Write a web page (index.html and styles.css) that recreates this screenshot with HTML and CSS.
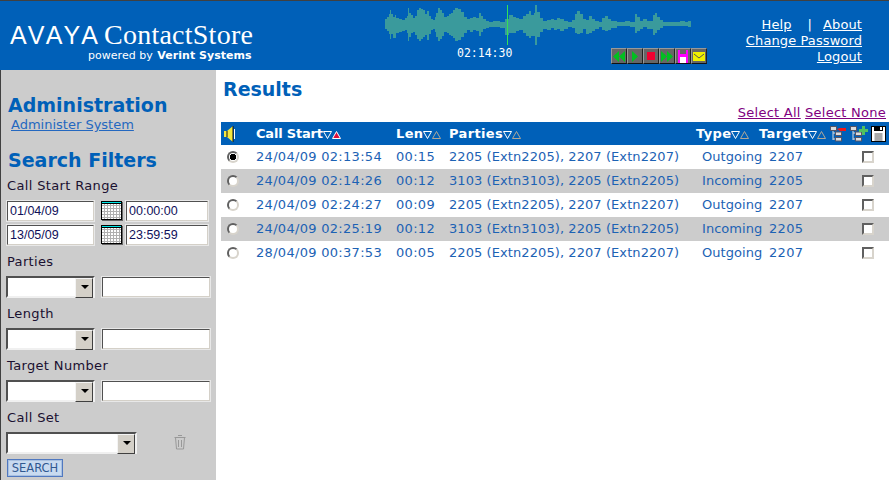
FILE: index.html
```html
<!DOCTYPE html>
<html lang="en">
<head>
<meta charset="utf-8">
<title>ContactStore Results</title>
<link rel="stylesheet" href="styles.css">
</head>
<body>
<svg class="defs" width="0" height="0" aria-hidden="true">
  <symbol id="down" viewBox="0 0 9 9"><path d="M.5 1.5h8L4.5 8.5z" fill="none" stroke="#fff"/></symbol>
  <symbol id="up" viewBox="0 0 9 9"><path d="M.5 8.5h8L4.500 1.500z" fill="none" stroke="#b0a898"/></symbol>
  <symbol id="up-on" viewBox="0 0 9 9"><path d="M.5 8.500h8L4.500 1.500z" fill="#e0103c" stroke="#fff"/></symbol>
  <symbol id="cal" viewBox="0 0 22 20">
    <rect x="0" y="0" width="21" height="19" fill="#000"/>
    <rect x="1" y="3" width="19" height="15" fill="#fff"/>
    <rect x="1" y="1" width="19" height="1" fill="#00e8e8"/>
    <path d="M3.500 3v15M6.500 3v15M9.500 3v15M12.500 3v15M15.500 3v15M18.500 3v15M1 4.500h19M1 7.500h19M1 10.500h19M1 13.500h19M1 16.500h19" stroke="#b0b0b0"/>
    <path d="M21 1h1v19H1v-1h20z" fill="#666"/>
  </symbol>
  <symbol id="tree" viewBox="0 0 13 16">
    <path d="M3 4v10M3 7h4M3 13h4" stroke="#ddd" fill="none"/>
    <rect x=".5" y=".500" width="6" height="4" fill="#ddd" stroke="#556"/>
    <rect x="5.500" y="6" width="6" height="3.500" fill="#ddd" stroke="#556"/>
    <rect x="5.500" y="11.500" width="6" height="3.500" fill="#ddd" stroke="#556"/>
  </symbol>
</svg>

<header class="top">
  <div class="brand">
    <div class="brand-line"><span class="avaya">AVAYA</span><span class="product">ContactStore</span></div>
    <div class="powered">powered by <b>Verint Systems</b></div>
  </div>
  <div class="player">
    <svg class="wave" width="306" height="47" viewBox="0 1 306 47" aria-hidden="true">
      <path fill="#3a9a9c" d="M0 24V19H2V17H4V14H5V10H6V14H8V17H10V15H11V18H14V19H17V20H20V18H22V16H23V8H24V13H26V15H28V18H30V16H32V10H34V8H36V9H38V10H40V14H42V11H44V16H46V19H48V20H50V17H51V13H53V8H55V10H57V13H59V17H62V16H64V14H66V13H68V10H70V8H73V9H76V12H79V17H82V19H85V18H88V17H91V18H94V13H96V16H98V19H101V21H104V22H108V21H115V22H120V19H124V15H128V17H131V18H134V19H138V16H141V14H144V11H146V15H149V13H150V5H152V12H155V18H158V21H162V20H166V19H169V20H172V18H175V19H179V21H183V22H187V20H190V14H192V11H195V14H198V19H201V20H204V16H207V19H210V21H214V22H217V18H220V16H223V19H226V21H232V22H240V21H245V22H250V14H252V17H255V21H258V19H262V21H268V15H270V13H272V17H275V20H278V22H295V21H300V22H303V21H306V27H303V26H278V28H275V30H272V33H270V35H268V29H262V27H258V29H255V31H252V33H250V27H245V26H232V28H226V30H223V31H220V30H217V27H214V29H210V31H207V33H204V34H201V29H198V33H195V34H192V33H190V28H187V27H183V29H179V31H175V29H172V30H169V28H166V30H162V29H158V32H155V37H152V45H150V36H146V38H144V36H141V33H138V30H134V31H131V33H128V33H124V35H120V28H115V27H104V28H101V29H98V32H96V36H94V31H91V30H88V32H85V30H82V33H79V37H76V40H73V41H70V38H68V36H66V35H64V33H62V32H59V36H57V39H55V41H53V37H51V32H50V29H48V30H46V34H44V40H42V35H40V37H38V39H36V41H34V39H32V35H30V32H28V33H26V37H24V41H23V33H22V30H20V31H17V32H14V33H11V38H8V34H6V39H5V34H4V31H2V29H0Z"/>
      <rect x="122" y="5" width="1" height="40" fill="#33e055"/>
    </svg>
    <div class="transport">
      <span class="clock">02:14:30</span>
      <div class="buttons">
        <span class="btn"><svg width="14" height="13" viewBox="0 0 14 13"><path d="M7 1v11L1 6.500zM13 1v11L7 6.500z" fill="#00c020"/></svg></span>
        <span class="btn"><svg width="14" height="13" viewBox="0 0 14 13"><path d="M4 1v11l6-5.500z" fill="#00c020"/></svg></span>
        <span class="btn"><svg width="14" height="13" viewBox="0 0 14 13"><rect x="3" y="2" width="8" height="8" fill="#f00030"/></svg></span>
        <span class="btn"><svg width="14" height="13" viewBox="0 0 14 13"><path d="M1 1v11l6-5.500zM7 1v11l6-5.500z" fill="#00c020"/></svg></span>
        <span class="btn"><svg width="14" height="13" viewBox="0 0 14 13"><rect x="2" y="0" width="10" height="13" fill="#f0f"/><rect x="4" y="0" width="6" height="4" fill="#666"/><rect x="4" y="7" width="6" height="6" fill="#fff"/></svg></span>
        <span class="btn"><svg width="14" height="13" viewBox="0 0 14 13"><rect x="1" y="2" width="12" height="9" fill="#f0f000"/><path d="M2 4l5 4 5-4" fill="none" stroke="#555"/></svg></span>
      </div>
    </div>
  </div>
  <nav class="account">
    <div><a href="#">Help</a><span class="sep">|</span><a href="#">About</a></div>
    <div><a href="#">Change Password</a></div>
    <div><a href="#">Logout</a></div>
  </nav>
</header>

<div class="page">
  <aside class="side">
    <h2 class="side-title first">Administration</h2>
    <a class="admin-link" href="#">Administer System</a>
    <h2 class="side-title filters">Search Filters</h2>

    <div class="label">Call Start Range</div>
    <div class="row">
      <input class="field date" value="01/04/09">
      <svg class="cal" width="22" height="20"><use href="#cal"/></svg>
      <input class="field time" value="00:00:00">
    </div>
    <div class="row second">
      <input class="field date" value="13/05/09">
      <svg class="cal" width="22" height="20"><use href="#cal"/></svg>
      <input class="field time" value="23:59:59">
    </div>

    <div class="label">Parties</div>
    <div class="row">
      <span class="combo"><select></select></span>
      <input class="field wide">
    </div>
    <div class="label">Length</div>
    <div class="row">
      <span class="combo"><select></select></span>
      <input class="field wide">
    </div>
    <div class="label">Target Number</div>
    <div class="row">
      <span class="combo"><select></select></span>
      <input class="field wide">
    </div>
    <div class="label">Call Set</div>
    <div class="row">
      <span class="combo long"><select></select></span>
      <svg class="bin" width="14" height="16" viewBox="0 0 14 16"><path d="M5 1.500h4M1.500 3.500h11M2.500 3.500l1 11.500h7l1-11.500M5.500 6v7M8.500 6v7" fill="none" stroke="#999"/></svg>
    </div>
    <button class="search" type="button">SEARCH</button>
  </aside>

  <main class="main">
    <h1 class="title">Results</h1>
    <div class="select-links"><a href="#">Select All</a> <a href="#">Select None</a></div>
    <table class="results">
      <colgroup>
        <col class="c-play"><col class="c-start"><col class="c-len"><col class="c-parties"><col class="c-type"><col class="c-target"><col class="c-tools">
      </colgroup>
      <thead>
        <tr>
          <th><svg class="speaker" width="12" height="16" viewBox="0 0 12 16"><path d="M0 5h3l6-5v16l-6-5H0z" fill="#f4e840"/><path d="M3 5v6M9 0v16" stroke="#111"/><path d="M10.500 3v10" stroke="#fff"/></svg></th>
          <th class="start-head">Call Start<svg class="sort"><use href="#down"/></svg><svg class="sort"><use href="#up-on"/></svg></th>
          <th>Len<svg class="sort"><use href="#down"/></svg><svg class="sort"><use href="#up"/></svg></th>
          <th>Parties<svg class="sort"><use href="#down"/></svg><svg class="sort"><use href="#up"/></svg></th>
          <th>Type<svg class="sort"><use href="#down"/></svg><svg class="sort"><use href="#up"/></svg></th>
          <th>Target<svg class="sort"><use href="#down"/></svg><svg class="sort"><use href="#up"/></svg></th>
          <th class="tools">
            <svg class="tool" width="18" height="16" viewBox="0 0 18 16"><use href="#tree" width="13" height="16"/><path d="M7 3l3-1h6v3h-6z" fill="#f01818"/></svg>
            <svg class="tool" width="18" height="16" viewBox="0 0 18 16"><use href="#tree" width="13" height="16"/><path d="M9 3h3V0h3v3h3v3h-3v3h-3V6H9z" fill="#50c060"/></svg>
            <svg class="tool" width="15" height="16" viewBox="0 0 15 16"><rect x=".5" y=".5" width="14" height="15" fill="#fff" stroke="#000"/><rect x="3" y="1" width="9" height="4" fill="#000"/><rect x="9" y="1" width="2" height="3" fill="#fff"/><path d="M3.500 8h8M3.500 10h8M3.500 12h8M3.500 14h8" stroke="#555"/></svg>
          </th>
        </tr>
      </thead>
      <tbody>
        <tr>
          <td class="pick"><input class="radio" type="radio" name="call" checked></td>
          <td>24/04/09 02:13:54</td><td>00:15</td><td class="parties">2205 (Extn2205), 2207 (Extn2207)</td>
          <td class="type">Outgoing</td><td class="target">2207</td><td class="mark"><input class="check" type="checkbox"></td>
        </tr>
        <tr>
          <td class="pick"><input class="radio" type="radio" name="call"></td>
          <td>24/04/09 02:14:26</td><td>00:12</td><td class="parties">3103 (Extn3103), 2205 (Extn2205)</td>
          <td class="type">Incoming</td><td class="target">2205</td><td class="mark"><input class="check" type="checkbox"></td>
        </tr>
        <tr>
          <td class="pick"><input class="radio" type="radio" name="call"></td>
          <td>24/04/09 02:24:27</td><td>00:09</td><td class="parties">2205 (Extn2205), 2207 (Extn2207)</td>
          <td class="type">Outgoing</td><td class="target">2207</td><td class="mark"><input class="check" type="checkbox"></td>
        </tr>
        <tr>
          <td class="pick"><input class="radio" type="radio" name="call"></td>
          <td>24/04/09 02:25:19</td><td>00:12</td><td class="parties">3103 (Extn3103), 2205 (Extn2205)</td>
          <td class="type">Incoming</td><td class="target">2205</td><td class="mark"><input class="check" type="checkbox"></td>
        </tr>
        <tr>
          <td class="pick"><input class="radio" type="radio" name="call"></td>
          <td>28/04/09 00:37:53</td><td>00:05</td><td class="parties">2205 (Extn2205), 2207 (Extn2207)</td>
          <td class="type">Outgoing</td><td class="target">2207</td><td class="mark"><input class="check" type="checkbox"></td>
        </tr>
      </tbody>
    </table>
  </main>
</div>
</body>
</html>
```

FILE: styles.css
```css
* { box-sizing: border-box; }

html, body { margin: 0; height: 480px; overflow: hidden; }

body {
  display: flex;
  flex-direction: column;
  background: #fff;
  color: #000;
  font: 13px/16px "DejaVu Sans", Verdana, sans-serif;
  letter-spacing: .3px;
}

.defs { position: absolute; }

/* Top banner */
.top {
  display: flex;
  flex: none;
  height: 70px;
  background: #0060b8;
  border-top: 1px solid #404040;
  color: #fff;
}

.brand { width: 385px; flex: none; padding: 20px 0 0 10px; }
.brand-line { display: flex; align-items: baseline; height: 28px; }
.avaya {
  font: 25px/28px "Liberation Sans", Arial, sans-serif;
  letter-spacing: 3px;
}
.product {
  margin-left: 3px;
  font: 28px/28px "Liberation Serif", "Times New Roman", serif;
  letter-spacing: .25px;
}
.powered { margin: 0 0 0 78px; font-size: 11px; line-height: 14px; letter-spacing: .03px; }
.powered b { margin-left: 1px; }

.player { width: 322px; flex: none; }
.wave { display: block; }
.transport { display: flex; }
.clock {
  margin: 0 0 0 72px;
  width: 154px;
  font: 11.500px/11px "DejaVu Sans Mono", "Liberation Mono", monospace;
  letter-spacing: 0;
}
.buttons { display: flex; }
.btn {
  display: flex;
  align-items: center;
  justify-content: center;
  width: 16px;
  height: 16px;
  background: #666;
  border: 1px solid;
  border-color: #999 #222 #111 #999;
}

.account {
  margin-left: 32px;
  width: 123px;
  flex: none;
  text-align: right;
  padding-top: 16px;
  white-space: nowrap;
  letter-spacing: .1px;
}
.account a { color: #fff; }
.sep { margin: 0 11px 0 16px; }

/* Page below the banner */
.page { display: flex; flex: 1; min-height: 0; }

.side {
  flex: none;
  width: 216px;
  padding-left: 5px;
  background: #ccc;
  border-left: 1px solid #404040;
  letter-spacing: .35px;
}
.side-title {
  margin: 0 0 0 2px;
  color: #0060b8;
  font-size: 19px;
  line-height: 24px;
  letter-spacing: 0;
}
.first { margin-top: 23px; }
.filters { margin-top: 15px; }
.admin-link { display: block; margin-left: 5px; color: #2468c0; letter-spacing: 0; }

.label { height: 16px; margin: 5px 0 7px 1px; padding-top: 1px; color: #1a1030; }
.row { display: flex; height: 22px; margin-bottom: 7px; }
.row.second { margin-top: -5px; }

.field {
  height: 22px;
  padding: 1px 2px;
  background: #fff;
  color: #10105a;
  font: 12.500px "Liberation Sans", Arial, sans-serif;
  letter-spacing: 0;
  border: 2px solid;
  border-color: #505050 #d4d0c8 #d4d0c8 #505050;
  outline: 1px solid #e8e8e8;
  outline-offset: -1px;
}
.date { width: 89px; }
.time { width: 84px; margin-left: 2px; }
.wide { width: 110px; margin-left: 6px; }
.cal { flex: none; margin: 1px 0 0 6px; }

.combo {
  position: relative;
  display: block;
  width: 89px;
  height: 22px;
}
.combo.long { width: 131px; }
.combo select {
  display: block;
  width: 100%;
  height: 100%;
  appearance: none;
  background: #fff;
  border: 2px solid;
  border-color: #505050 #f0f0f0 #f0f0f0 #505050;
  border-radius: 0;
}
.combo::after {
  content: "";
  position: absolute;
  top: 2px;
  right: 2px;
  width: 16px;
  height: 18px;
  background: #d4d0c8;
  border: 1px solid;
  border-color: #f4f4f4 #404040 #404040 #f4f4f4;
}
.combo::before {
  content: "";
  position: absolute;
  z-index: 1;
  top: 9px;
  right: 6px;
  border: 4px solid transparent;
  border-top: 4px solid #000;
  border-bottom: 0;
}
.bin { margin: 2px 0 0 36px; }

.search {
  display: block;
  width: 56px;
  height: 18px;
  margin: -2px 0 0 1px;
  padding: 0;
  background: #c8daf0;
  color: #305890;
  border: 1px solid #5078c0;
  box-shadow: inset 0 0 0 1px #a8c0e0;
  font: 11.500px "DejaVu Sans", Verdana, sans-serif;
  letter-spacing: 0;
}

/* Results */
.main { flex: 1; min-width: 0; padding-left: 5px; }
.title {
  margin: 7px 0 0 2px;
  color: #0060b8;
  font-size: 19px;
  line-height: 24px;
  letter-spacing: 0;
}
.select-links { margin-top: 4px; padding-right: 3px; text-align: right; height: 17px; letter-spacing: .25px; }
.select-links a { color: #800080; }

.results { width: 668px; table-layout: fixed; border-collapse: collapse; }
.c-play { width: 35px; }
.c-start { width: 140px; }
.c-len { width: 53px; }
.c-parties { width: 247px; }
.c-type { width: 63px; }
.c-target { width: 71px; }
.c-tools { width: 59px; }

.results th {
  height: 23px;
  padding: 0;
  background: #0060b8;
  color: #fff;
  text-align: left;
  white-space: nowrap;
  letter-spacing: .35px;
}
.results th.start-head { letter-spacing: -.2px; }
.results td {
  height: 24px;
  padding: 0;
  color: #1c62b4;
  white-space: nowrap;
}
.results tbody tr:nth-child(even) td { background: #ccc; }

.sort { width: 9px; height: 9px; margin-left: 0; vertical-align: -1px; }
.speaker { display: block; margin-left: 3px; }
.tools { font-size: 0; }
.tool { vertical-align: middle; }
.tool + .tool { margin-left: 2px; }

.results .pick { padding-left: 6px; }
.results .parties { letter-spacing: .08px; }
.results .type { padding-left: 6px; letter-spacing: .05px; }
.results .target { padding-left: 10px; }
.results .mark { padding-left: 32px; }

.radio, .check {
  display: block;
  appearance: none;
  margin: 0;
  width: 12px;
  height: 12px;
  background: #fff;
  border: 2px solid;
  border-color: #606060 #d8d4cc #d8d4cc #606060;
}
.radio { border-radius: 50%; }
.radio:checked { background: radial-gradient(circle, #000 0 3px, #fff 3.500px); }
```
